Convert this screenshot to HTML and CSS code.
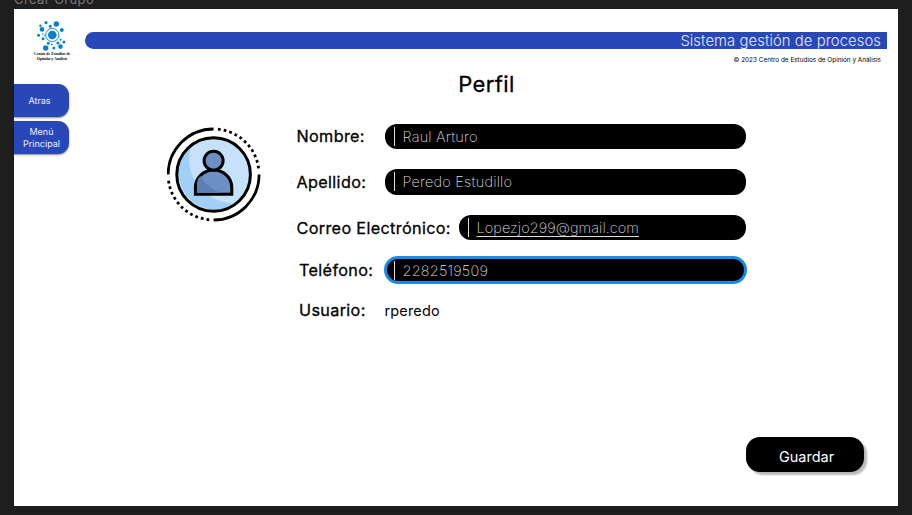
FILE: index.html
```html
<!DOCTYPE html>
<html lang="es">
<head>
<meta charset="utf-8">
<title>Perfil</title>
<link rel="stylesheet" href="styles.css">
</head>
<body>
<div class="frame-name">Crear Grupo</div>
<div class="frame">
  <header class="header">
    <div class="logo">
      <svg width="30" height="32" viewBox="37 20 30 32" fill="#0a80c6">
        <circle cx="52.3" cy="35" r="4.3"/>
        <circle cx="52.3" cy="35" r="6.6" fill="none" stroke="#0a80c6" stroke-width=".9"/>
        <circle cx="42" cy="29.4" r="2.3"/><circle cx="46" cy="22.7" r="1.6"/><circle cx="50.3" cy="26.2" r="1.5"/>
        <circle cx="56.3" cy="24" r="2.7"/><circle cx="61.8" cy="29.9" r="2"/><circle cx="40.4" cy="25.8" r="1.2"/>
        <circle cx="38.6" cy="35.2" r="1.5"/><circle cx="42.6" cy="34" r=".8"/><circle cx="43" cy="38.7" r="1.5"/>
        <circle cx="48.3" cy="43.2" r="1.5"/><circle cx="45.7" cy="48" r="2.7"/><circle cx="51.8" cy="44.4" r=".9"/>
        <circle cx="53.9" cy="47.9" r="1.5"/><circle cx="57.9" cy="42.9" r="1.5"/><circle cx="60.5" cy="46.6" r="2.3"/>
        <circle cx="63.9" cy="42" r="1.5"/><circle cx="60.6" cy="39.8" r="1"/><circle cx="44.5" cy="35.3" r=".6"/>
      </svg>
      <div class="logo-text">Centro de Estudios de<br>Opinión y Análisis</div>
    </div>
    <div class="heading">
      <div class="bar"><span>Sistema gestión de procesos</span></div>
      <div class="copyright">© 2023 Centro de Estudios de Opinión y Análisis</div>
    </div>
  </header>
  <div class="body">
    <nav class="side">
      <a class="tab">Atras</a>
      <a class="tab">Menú<br>Principal</a>
    </nav>
    <main class="main">
      <h1 class="title">Perfil</h1>
      <div class="profile">
        <svg class="avatar" width="94" height="96" viewBox="167 127 94 96" fill="none" stroke="#000" stroke-width="3">
          <circle cx="213.6" cy="174.5" r="36.8" fill="#c7e1fa" stroke="none"/>
          <path d="M191 145.500A36.8 36.8 0 0 0 236 203.500C208 204 182 180 191 145.500Z" fill="#a2cff8" stroke="none"/>
          <circle cx="213.6" cy="174.5" r="36.8"/>
          <path d="M195.400 194.300V187.500A18.200 17.500 0 0 1 231.800 187.500V194.300Z" fill="#6c90c3"/>
          <path d="M197 192.800V187C197 180 198 178 201 176C204 184 211 189 221 192.800Z" fill="#5c80b6" stroke="none"/>
          <circle cx="213.6" cy="160.700" r="9.500" fill="#6c90c3"/>
          <path d="M168.100 174.500A45.500 45.500 0 0 1 213.600 129M259.100 174.500A45.500 45.500 0 0 1 213.600 220" stroke-width="2.800"/>
          <path d="M218 129.200A45.500 45.500 0 0 1 258.800 170M209.200 219.800A45.500 45.500 0 0 1 168.300 179" stroke-width="2.800" stroke-dasharray="2.700 3.100"/>
        </svg>
        <form class="form">
          <div class="row"><label class="label">Nombre:</label><div class="field"><i class="caret"></i><span>Raul Arturo</span></div></div>
          <div class="row"><label class="label">Apellido:</label><div class="field"><i class="caret"></i><span>Peredo Estudillo</span></div></div>
          <div class="row"><label class="label mail">Correo Electrónico:</label><div class="field"><i class="caret"></i><span class="link">Lopezjo299@gmail.com</span></div></div>
          <div class="row phone-row"><label class="label phone">Teléfono:</label><div class="field focus"><i class="caret"></i><span>2282519509</span></div></div>
          <div class="row user-row"><label class="label user">Usuario:</label><span class="username">rperedo</span></div>
        </form>
      </div>
      <button class="save" type="button">Guardar</button>
    </main>
  </div>
</div>
</body>
</html>
```

FILE: styles.css
```css
* { box-sizing: border-box; }
body {
  margin: 0;
  width: 912px;
  height: 515px;
  overflow: hidden;
  background: #1e1e1e;
  font-family: Inter, "Liberation Sans", sans-serif;
  color: #000;
}
.frame-name {
  height: 18px;
  margin-top: -9px;
  padding-left: 14px;
  overflow: hidden;
  color: #777;
  font-size: 13px;
  letter-spacing: .4px;
  line-height: 16px;
}
.frame {
  width: 884px;
  height: 496.500px;
  margin-left: 14px;
  background: #fff;
  display: flex;
  flex-direction: column;
}
.header { display: flex; height: 61px; }
.logo { width: 71px; padding: 11px 0 0 23px; }
.logo svg { display: block; }
.logo-text {
  width: 60px;
  margin: 0 0 0 -15px;
  font: bold 3.900px/4.500px "Liberation Serif", serif;
  text-align: center;
  white-space: nowrap;
}
.heading { width: 802px; padding-top: 22.500px; }
.bar {
  height: 17.500px;
  border-radius: 9px 0 0 9px;
  background: #2847b8;
  color: #e6eaf8;
  text-align: right;
  padding-right: 6px;
  font-size: 14.800px;
  font-weight: 300;
  letter-spacing: .08px;
  line-height: 18px;
}
.copyright {
  margin-top: 5.500px;
  padding-right: 6px;
  text-align: right;
  font-size: 6.400px;
  line-height: 10px;
}
.body { display: flex; flex: 1; }
.side { width: 55px; padding-top: 14px; }
.tab {
  display: flex;
  align-items: center;
  justify-content: center;
  height: 33px;
  margin-bottom: 4px;
  padding-right: 4px;
  border-radius: 0 11px 11px 0;
  background: #2847b8;
  box-shadow: 0 1px 2px rgba(0, 0, 0, .45);
  color: #eef;
  font-size: 9px;
  line-height: 12px;
  text-align: center;
}
.tab + .tab { padding-right: 0; }
.main { flex: 1; display: flex; flex-direction: column; }
.title {
  margin: 0;
  padding-left: 6px;
  height: 28px;
  font-size: 22px;
  font-weight: 400;
  -webkit-text-stroke: .3px #000;
  letter-spacing: .4px;
  line-height: 28px;
  text-align: center;
}
.profile { display: flex; padding: 25.500px 0 0 97.500px; height: 339px; }
.avatar { margin-top: 3px; flex: none; }
.form { width: 450px; margin-left: 35.500px; }
.row { display: flex; align-items: center; height: 25.500px; margin-bottom: 20.200px; }
.phone-row { height: 27.500px; margin: -4.500px 0 13px; }
.label {
  width: 88.500px;
  flex: none;
  padding-left: .500px;
  font-size: 16.200px;
  font-weight: 400;
  -webkit-text-stroke: .3px #000;
  letter-spacing: .350px;
  white-space: nowrap;
}
.mail { width: 162.500px; }
.phone, .user { padding-left: 3px; }
.phone { padding-top: 1px; }
.field {
  flex: 1;
  height: 100%;
  display: flex;
  align-items: center;
  padding-left: 9px;
  border-radius: 12px;
  background: #000;
  color: #dcdcdc;
  font-size: 14.500px;
  font-weight: 200;
  letter-spacing: .2px;
  white-space: nowrap;
}
.focus {
  margin: 0 -1px;
  padding: 1px 0 0 7px;
  border: 3px solid #168be8;
  border-radius: 14px;
}
.caret { width: 1.500px; height: 19px; margin-right: 7.500px; background: #ddd; }
.link {
  letter-spacing: .05px;
  text-decoration: underline;
  text-decoration-thickness: 1px;
  text-underline-offset: 2.500px;
  text-decoration-skip-ink: none;
}
.username { font-size: 14.500px; letter-spacing: .150px; }
.user-row { margin: 0; padding-top: 2px; }
.save {
  width: 118px;
  height: 35px;
  margin: 0 0 0 677px;
  border: 0;
  padding: 4px 0 0 3px;
  border-radius: 14px;
  background: #000;
  box-shadow: 3px 3px 2px rgba(0, 0, 0, .28);
  color: #fff;
  font-family: inherit;
  font-size: 14.500px;
}
```
